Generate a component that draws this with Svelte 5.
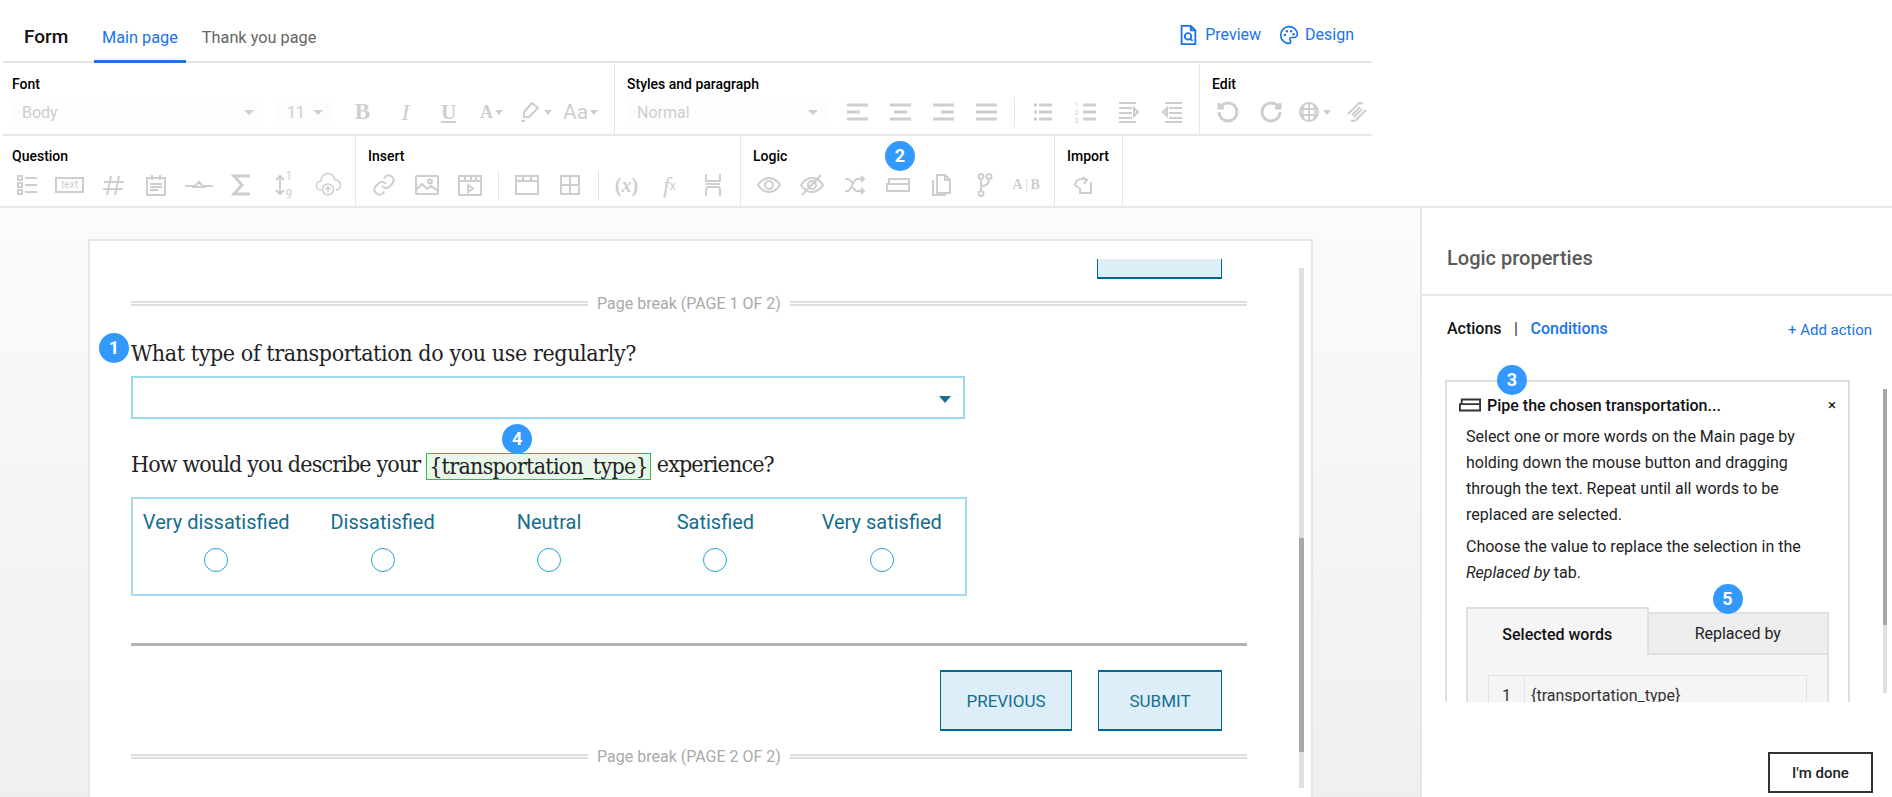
<script>
  const paths = {
    list: 'M3 3h4v4H3z M3 10h4v4H3z M3 17h4v4H3z M10 5h12 M10 12h12 M10 19h12',
    hash: 'M10 3L6 22 M18 3l-4 19 M3 9h20 M2 16h20',
    calendar: 'M3 5h18v17H3z M8 2v5 M16 2v5 M6 11h12 M6 14h12 M6 17h8',
    slider: 'M-2 13h9 M17 13h9 M7 14l5-5 5 5z',
    sigma: 'M20 3H4l8 9-8 9h16',
    sort: 'M7 3v18 M3 7l4-4 4 4 M3 17l4 4 4-4',
    cloud: 'M5 17a4.5 4.5 0 0 1 0-9 7 7 0 0 1 14-1 5 5 0 0 1 1 10 M12 11a5.5 5.5 0 1 0 0 11 5.5 5.5 0 0 0 0-11z M12 20v-6 M9.5 16.5L12 14l2.5 2.5',
    link: 'M10 13a5 5 0 0 0 7.5.5l3-3a5 5 0 0 0-7-7l-1.7 1.7 M14 11a5 5 0 0 0-7.5-.5l-3 3a5 5 0 0 0 7 7l1.7-1.7',
    image: 'M1 4a1 1 0 0 1 1-1h20a1 1 0 0 1 1 1v16a1 1 0 0 1-1 1H2a1 1 0 0 1-1-1z M1 17l6-6 5 5 4-3 7 5 M15 6.5a2 2 0 1 0 0 4 2 2 0 0 0 0-4z',
    video: 'M1 3h22v19H1z M1 8h22 M7 3v5 M13 3v5 M18 3v5 M10 12l5 3.5-5 3.5z',
    win: 'M1 3h22v18H1z M1 8h22 M8 3v5 M16 3v5',
    grid: 'M3 3h18v18H3z M12 3v18 M3 12h18',
    split: 'M5 1v7h14V1 M5 23v-6c0-2 1-3 3-3h8c2 0 3 1 3 3v6 M5 11h14',
    eye: 'M1 12s4-7 11-7 11 7 11 7-4 7-11 7S1 12 1 12z M12 8a4 4 0 1 0 0 8 4 4 0 0 0 0-8z',
    eyeoff: 'M1 12s4-7 11-7 11 7 11 7-4 7-11 7S1 12 1 12z M12 8a4 4 0 1 0 0 8 4 4 0 0 0 0-8z M2 22L21 2',
    shuffle: 'M2 18h3c3 0 5-12 9-12h7 M18 3l3 3-3 3 M2 6h3c1.5 0 3 2 4 4 M21 18h-7c-1.5 0-3-2-4-4 M18 15l3 3-3 3',
    pipe: 'M3 10V6h20v5 M1 11h22v7H1z',
    copy: 'M8 2h8l5 5v13H8z M16 2v5h5 M4 7v15h13',
    branch: 'M9 6v12 M9 13c5 0 8-2 8-7 M9 1a2.5 2.5 0 1 0 0 5 2.5 2.5 0 0 0 0-5z M17 1a2.5 2.5 0 1 0 0 5 2.5 2.5 0 0 0 0-5z M9 18a2.5 2.5 0 1 0 0 5 2.5 2.5 0 0 0 0-5z',
    importbox: 'M4 13a7 7 0 0 1 11-6 M12 4l4 3-3 4 M20 9v11H9v-5 M4 12l4 3',
    alignl: 'M2 5h21 M2 12h13 M2 19h21',
    alignc: 'M2 5h21 M6 12h13 M2 19h21',
    alignr: 'M2 5h21 M10 12h13 M2 19h21',
    alignj: 'M2 5h21 M2 12h21 M2 19h21',
    bullets: 'M3 5h3 M8 5h13 M3 12h3 M8 12h13 M3 19h3 M8 19h13',
    numbers: 'M9 5h13 M9 12h13 M9 19h13',
    indent: 'M2 3h17 M2 8h13 M2 13h13 M2 18h13 M2 22h17 M17 8l4 4-4 4z',
    outdent: 'M5 3h17 M9 8h13 M9 13h13 M9 18h13 M5 22h17 M7 8l-4 4 4 4z',
    undo: 'M3 12a9 9 0 1 0 9-9 9.7 9.7 0 0 0-6.7 2.7L3 8 M3 3v5h5',
    redo: 'M21 12a9 9 0 1 1-9-9 9.7 9.7 0 0 1 6.7 2.7L21 8 M21 3v5h-5',
    globe: 'M12 3a9 9 0 1 0 0 18 9 9 0 0 0 0-18z M3 9h18 M3 15h18 M12 3v18 M7 4.5c-2 4-2 11 0 15 M17 4.5c2 4 2 11 0 15',
    unlink: 'M3 14L13 4a3.5 3.5 0 0 1 5 0 M21 10L11 20a3.5 3.5 0 0 1-5 0 M7 15l8-8 M9 17l8-8',
    pen: 'M14 3l6 5-9 9H6v-5z M3 21h4'
  }

  const question = [
    { icon: 'list' }, { box: 'text' }, { icon: 'hash' }, { icon: 'calendar' }, { icon: 'slider' },
    { icon: 'sigma', heavy: true }, { icon: 'sort', digits: true }, { icon: 'cloud', thin: true }
  ]
  const logic = ['eye', 'eyeoff', 'shuffle', 'pipe', 'copy', 'branch'].map((icon) => ({ icon }))
</script>

{#snippet svg(name, cls = '')}
  <svg class={cls} viewBox="0 0 24 24" width="24" height="24" aria-hidden="true">
    <path d={paths[name]} />
  </svg>
{/snippet}

{#snippet tool(t)}
  <span class="tool">
    {#if t.icon}
      <span class="iconwrap">
        {@render svg(t.icon, t.heavy ? 'heavy' : t.thin ? 'thin' : '')}
        {#if t.digits}<span class="digit d1">1</span><span class="digit d9">9</span>{/if}
      </span>
    {:else if t.box}
      <span class="textbox">{t.box}</span>
    {/if}
  </span>
{/snippet}

<div class="app">
  <div class="top">
    <header class="bar">
      <span class="brand">Form</span>
      <nav class="tabs">
        <span class="tab active">Main page</span>
        <span class="tab">Thank you page</span>
      </nav>
      <div class="links">
        <span class="link">
          <svg viewBox="0 0 24 24" width="22" height="22" aria-hidden="true"><path d="M5 2h10l5 5v15H5z M15 2v5h5 M12 10a3.5 3.5 0 1 0 0 7 3.5 3.5 0 0 0 0-7z M14.5 16l2.5 2.5" /></svg>
          Preview
        </span>
        <span class="link">
          <svg class="palette" viewBox="0 0 24 24" width="20" height="20" aria-hidden="true"><path d="M12 2a10 10 0 1 0 0 20c1.5 0 2-1 2-2 0-1.5-1-1.5-1-3 0-1 1-2 2-2h3a4 4 0 0 0 4-4c0-5-4.5-9-10-9z" /><path class="dots" d="M7 12v.1 M9.5 7.5v.1 M14.5 7.5v.1 M17.5 11v.1" /></svg>
          Design
        </span>
      </div>
    </header>

    <div class="row">
      <section class="group g-font">
        <h4>Font</h4>
        <div class="tools">
          <span class="select body">Body<i class="caret"></i></span>
          <span class="select size">11<i class="caret"></i></span>
          <span class="tool glyph b">B</span>
          <span class="tool glyph i">I</span>
          <span class="tool glyph u">U</span>
          <span class="tool glyph a">A<i class="caret small"></i></span>
          <span class="tool">{@render svg('pen')}<i class="caret small"></i></span>
          <span class="tool glyph aa">Aa<i class="caret small"></i></span>
        </div>
      </section>
      <section class="group g-styles">
        <h4>Styles and paragraph</h4>
        <div class="tools">
          <span class="select normal">Normal<i class="caret"></i></span>
          {#each ['alignl', 'alignc', 'alignr', 'alignj'] as icon}
            <span class="tool">{@render svg(icon, 'heavy')}</span>
          {/each}
          <span class="sep"></span>
          <span class="tool">{@render svg('bullets', 'heavy')}</span>
          <span class="tool">
            <span class="iconwrap">
              {@render svg('numbers', 'heavy')}
              <span class="mini">1<br />2<br />3</span>
            </span>
          </span>
          <span class="tool">{@render svg('indent')}</span>
          <span class="tool">{@render svg('outdent')}</span>
        </div>
      </section>
      <section class="group last">
        <h4>Edit</h4>
        <div class="tools">
          <span class="tool">{@render svg('undo', 'heavy')}</span>
          <span class="tool">{@render svg('redo', 'heavy')}</span>
          <span class="tool">{@render svg('globe')}<i class="caret small"></i></span>
          <span class="tool">{@render svg('unlink')}</span>
        </div>
      </section>
    </div>

    <div class="row second">
      <section class="group">
        <h4>Question</h4>
        <div class="tools q">
          {#each question as t}{@render tool(t)}{/each}
        </div>
      </section>
      <section class="group">
        <h4>Insert</h4>
        <div class="tools">
          <span class="tool">{@render svg('link')}</span>
          <span class="tool">{@render svg('image')}</span>
          <span class="tool">{@render svg('video')}</span>
          <span class="sep"></span>
          <span class="tool">{@render svg('win')}</span>
          <span class="tool">{@render svg('grid')}</span>
          <span class="sep"></span>
          <span class="tool glyph x">(<em>x</em>)</span>
          <span class="tool glyph fx"><em>f</em><small>x</small></span>
          <span class="tool">{@render svg('split')}</span>
        </div>
      </section>
      <section class="group g-logic">
        <h4>Logic</h4>
        <span class="badge b2">2</span>
        <div class="tools">
          {#each logic as t}{@render tool(t)}{/each}
          <span class="tool glyph ab">A<span class="bar-i">|</span>B</span>
        </div>
      </section>
      <section class="group g-import">
        <h4>Import</h4>
        <div class="tools">
          <span class="tool">{@render svg('importbox')}</span>
        </div>
      </section>
    </div>
  </div>

  <main class="work">
    <div class="stage">
      <div class="sheet">
        <div class="flow">
          <div class="stub"></div>

          <div class="pagebreak first"><span>Page break (PAGE 1 OF 2)</span></div>

          <div class="qn q1">
            <span class="badge b1">1</span>
            What type of transportation do you use regularly?
          </div>
          <div class="dropdown"><i class="drop-caret"></i></div>

          <div class="qn q2">
            How would you describe your
            <span class="token"><span class="badge b4">4</span>&#123;transportation_type&#125;</span>
            experience?
          </div>

          <div class="matrix">
            {#each ['Very dissatisfied', 'Dissatisfied', 'Neutral', 'Satisfied', 'Very satisfied'] as label}
              <div class="cell">
                <span>{label}</span>
                <i class="radio"></i>
              </div>
            {/each}
          </div>

          <div class="rule"></div>

          <div class="actions">
            <button class="btn prev">PREVIOUS</button>
            <button class="btn submit">SUBMIT</button>
          </div>

          <div class="pagebreak"><span>Page break (PAGE 2 OF 2)</span></div>
        </div>
        <div class="scroll"><div class="thumb"></div></div>
      </div>
    </div>

    <aside class="panel">
      <div class="panel-head">Logic properties</div>
      <div class="panel-tabs">
        <strong>Actions</strong>
        <span class="pipe-sep">|</span>
        <span class="cond">Conditions</span>
        <span class="add">+ Add action</span>
      </div>

      <div class="card-clip">
        <div class="card">
          <span class="badge b3">3</span>
          <div class="card-title">
            <svg viewBox="0 0 24 24" width="22" height="22" aria-hidden="true"><path d={paths.pipe} /></svg>
            <span>Pipe the chosen transportation...</span>
            <span class="close">×</span>
          </div>
          <div class="card-body">
            <p>Select one or more words on the Main page by holding down the mouse button and dragging through the text. Repeat until all words to be replaced are selected.</p>
            <p>Choose the value to replace the selection in the <em>Replaced by</em> tab.</p>
          </div>
          <div class="pane">
            <div class="pane-tabs">
              <span class="pane-tab on">Selected words</span>
              <span class="pane-tab">
                <span class="badge b5">5</span>
                Replaced by
              </span>
            </div>
            <div class="pane-body">
              <div class="word-row">
                <span class="num">1</span>
                <span class="word">&#123;transportation_type&#125;</span>
              </div>
            </div>
          </div>
        </div>
        <div class="scroll panel-scroll"><div class="thumb"></div></div>
      </div>

      <div class="panel-foot">
        <button class="done">I'm done</button>
      </div>
    </aside>
  </main>
</div>

<style>
  :global(body) {
    margin: 0;
    background: #fff;
    font-family: Roboto, "Liberation Sans", sans-serif;
  }

  .app {
    width: 1892px;
    height: 797px;
    overflow: hidden;
    display: flex;
    flex-direction: column;
    color: #222;
  }

  .top {
    width: 1372px;
    height: 206px;
    flex: none;
  }

  .bar {
    height: 61px;
    margin-left: 3px;
    border-bottom: 2px solid #e4e4e4;
    display: flex;
    align-items: flex-end;
    padding-left: 21px;
  }

  .brand {
    font-size: 19px;
    font-weight: 500;
    color: #111;
    align-self: flex-start;
    margin-top: 25px;
    width: 70px;
  }

  .tabs {
    display: flex;
    gap: 8px;
  }

  .tab {
    padding: 0 8px 11px;
    font-size: 16.3px;
    line-height: 22px;
    color: #666;
    margin-bottom: -2px;
    border-bottom: 3px solid transparent;
  }

  .tab.active {
    color: #1a73e8;
    border-bottom-color: #1a73e8;
  }

  .links {
    margin-left: auto;
    align-self: flex-start;
    margin-top: 24px;
    display: flex;
    gap: 18px;
    padding-right: 18px;
  }

  .link {
    display: flex;
    align-items: center;
    gap: 6px;
    font-size: 16px;
    line-height: 22px;
    color: #1a73e8;
  }

  .link svg path {
    fill: none;
    stroke: #1a73e8;
    stroke-width: 2;
  }

  .link svg .dots {
    stroke-linecap: round;
    stroke-width: 3;
  }

  .row {
    display: flex;
    height: 71px;
    margin-left: 3px;
    border-bottom: 2px solid #e8e8e8;
    overflow: hidden;
  }

  .row.second {
    height: 70px;
    border-bottom: 0;
  }

  .group {
    position: relative;
    margin-left: -3px;
    padding: 13px 6px 0;
    border-right: 1px solid #e6e6e6;
    flex: none;
  }

  .group + .group {
    margin-left: 0;
  }

  .row.second .group {
    padding-top: 12px;
  }

  .row.second h4 {
    margin-bottom: 7px;
  }

  .row.second .group:first-child .tools {
    margin-left: -1px;
  }

  .group.last {
    border-right: 0;
  }

  .g-import {
    width: 68px;
    box-sizing: border-box;
  }

  h4 {
    margin: 0 0 6px 6px;
    font-size: 14px;
    line-height: 16px;
    font-weight: 500;
    color: #000;
    white-space: nowrap;
  }

  .tools {
    display: flex;
    align-items: center;
    height: 28px;
  }

  .tool {
    width: 43px;
    height: 28px;
    flex: none;
    display: flex;
    align-items: center;
    justify-content: center;
    color: #cdcdd2;
  }

  .tool svg {
    overflow: visible;
    flex: none;
  }

  .tool svg path {
    fill: none;
    stroke: #cdcdd2;
    stroke-width: 2;
  }

  .tool svg.heavy path {
    stroke-width: 3;
  }

  .tool svg.thin path {
    stroke-width: 1.5;
  }

  .iconwrap {
    position: relative;
    display: flex;
  }

  .digit {
    position: absolute;
    left: 13px;
    font-size: 12px;
    line-height: 12px;
    color: #cdcdd2;
  }

  .d1 { top: -3px; }
  .d9 { bottom: -3px; }

  .mini {
    position: absolute;
    left: 1px;
    top: 1px;
    font-size: 7px;
    line-height: 8px;
    color: #cdcdd2;
  }

  .textbox {
    width: 25px;
    height: 12px;
    border: 2px solid #cdcdd2;
    font-size: 10px;
    line-height: 12px;
    text-align: center;
    color: #cdcdd2;
  }

  .select {
    box-sizing: border-box;
    height: 28px;
    display: flex;
    align-items: center;
    justify-content: space-between;
    padding: 0 10px;
    background: #fdfdfd;
    color: #cdcdd2;
    font-size: 16px;
    flex: none;
  }

  .body {
    width: 252px;
    margin-left: 6px;
    margin-right: 13px;
  }

  .size {
    width: 56px;
    margin-right: 8px;
  }

  .normal {
    width: 201px;
    margin-left: 6px;
    margin-right: 7px;
  }

  .caret {
    display: block;
    width: 0;
    height: 0;
    border-left: 5px solid transparent;
    border-right: 5px solid transparent;
    border-top: 5px solid #cdcdd2;
    flex: none;
  }

  .caret.small {
    border-left-width: 4.5px;
    border-right-width: 4.5px;
    margin-left: 2px;
  }

  .glyph {
    font-family: "Liberation Serif", serif;
    font-size: 21px;
    font-weight: 700;
  }

  .glyph.b { font-size: 23px; }
  .glyph.i { font-style: italic; font-weight: 400; font-size: 24px; }
  .glyph.u { text-decoration: underline; font-size: 21px; }
  .glyph.a { font-size: 18px; }
  .glyph.aa { font-family: Roboto, sans-serif; font-weight: 400; font-size: 21px; width: 52px; justify-content: flex-start; padding-left: 7px; box-sizing: border-box; }
  .glyph.x { font-size: 20px; }
  .glyph.fx { font-weight: 400; font-size: 24px; }
  .glyph.fx small { font-size: 13px; font-family: Roboto, sans-serif; }
  .glyph.ab { font-size: 14px; font-weight: 700; letter-spacing: 0.5px; }
  .bar-i { font-weight: 400; margin: 0 2px; }

  .sep {
    width: 14px;
    height: 30px;
    flex: none;
    background: linear-gradient(#e6e6e6, #e6e6e6) center / 1px 100% no-repeat;
  }

  .badge {
    position: absolute;
    width: 30px;
    height: 30px;
    border-radius: 50%;
    background: #3399ff;
    color: #fff;
    font-family: Roboto, sans-serif;
    font-size: 18px;
    font-weight: 700;
    font-style: normal;
    line-height: 30px;
    text-align: center;
    letter-spacing: 0;
    z-index: 2;
  }

  .b2 { left: 144px; top: 5px; }

  .work {
    flex: 1;
    min-height: 0;
    display: flex;
    border-top: 2px solid #e8e8e8;
  }

  .stage {
    width: 1420px;
    flex: none;
    box-sizing: border-box;
    padding: 31px 0 0 88px;
    background: linear-gradient(#fbfbfb, #efefef);
  }

  .sheet {
    position: relative;
    width: 1225px;
    height: 600px;
    box-sizing: border-box;
    border: 2px solid #e6e6e6;
    background: #fff;
    overflow: hidden;
  }

  .flow {
    width: 1116px;
    padding-left: 41px;
  }

  .stub {
    width: 125px;
    height: 20px;
    margin: 18px 0 0 966px;
    box-sizing: border-box;
    background: #deeef8;
    border: 1px solid #00688f;
    border-top: 0;
    border-bottom-width: 2px;
  }

  .pagebreak {
    height: 20px;
    margin-top: 15px;
    display: flex;
    align-items: center;
    gap: 9px;
    font-size: 16px;
    color: #aaa;
  }

  .pagebreak.first {
    margin-top: 14px;
  }

  .pagebreak::before,
  .pagebreak::after {
    content: "";
    flex: 1;
    height: 5px;
    box-sizing: border-box;
    border-top: 2px solid #ddd;
    border-bottom: 2px solid #ddd;
  }

  .qn {
    position: relative;
    height: 30px;
    font-family: "DejaVu Serif Condensed", "Liberation Serif", serif;
    font-size: 23px;
    line-height: 30px;
    color: #222;
    white-space: nowrap;
  }

  .q1 { margin-top: 25px; letter-spacing: -0.4px; }
  .q2 { margin-top: 30px; letter-spacing: -0.85px; }

  .b1 { left: -32px; top: -5px; }

  .dropdown {
    position: relative;
    width: 834px;
    height: 43px;
    margin-top: 8px;
    box-sizing: border-box;
    border: 2px solid #9bd9ef;
  }

  .drop-caret {
    position: absolute;
    right: 12px;
    top: 18px;
    width: 0;
    height: 0;
    border-left: 6px solid transparent;
    border-right: 6px solid transparent;
    border-top: 7px solid #136e90;
  }

  .token {
    position: relative;
    display: inline-block;
    box-sizing: border-box;
    height: 27px;
    line-height: 25px;
    padding: 0 2px;
    background: #e9f7ea;
    border: 1.5px solid #3cb85a;
    vertical-align: middle;
    letter-spacing: -0.7px;
  }

  .b4 { left: 75px; top: -30px; }

  .matrix {
    width: 836px;
    height: 99px;
    margin-top: 18px;
    box-sizing: border-box;
    border: 2px solid #a6dcef;
    display: grid;
    grid-template-columns: repeat(5, 1fr);
  }

  .cell {
    display: flex;
    flex-direction: column;
    align-items: center;
    padding-top: 12px;
    gap: 15px;
    font-size: 20px;
    line-height: 22px;
    color: #136e90;
  }

  .radio {
    display: block;
    width: 24px;
    height: 24px;
    box-sizing: border-box;
    border: 1.5px solid #2a9fcf;
    border-radius: 50%;
  }

  .rule {
    height: 3px;
    margin-top: 47px;
    background: #b3b3b3;
  }

  .actions {
    display: flex;
    justify-content: flex-end;
    gap: 26px;
    padding-right: 25px;
    margin-top: 24px;
  }

  .btn {
    height: 61px;
    box-sizing: border-box;
    background: #deeef8;
    border: 1px solid #00688f;
    border-top-width: 2px;
    border-bottom-width: 2px;
    color: #136e90;
    font-family: Roboto, sans-serif;
    font-size: 17px;
    padding: 0;
  }

  .prev { width: 132px; }
  .submit { width: 124px; }

  .scroll {
    position: absolute;
    left: 1209px;
    top: 27px;
    width: 5px;
    height: 520px;
    background: #e0e0e0;
  }

  .thumb {
    position: absolute;
    left: 0;
    top: 270px;
    width: 100%;
    height: 214px;
    background: #a8a8a8;
  }

  .panel {
    flex: 1;
    border-left: 2px solid #e6e6e6;
    display: flex;
    flex-direction: column;
    min-width: 0;
  }

  .panel-head {
    height: 88px;
    box-sizing: border-box;
    padding: 37px 0 0 25px;
    font-size: 20px;
    line-height: 26px;
    font-weight: 500;
    color: #5a5a5a;
    border-bottom: 2px solid #e8e8e8;
  }

  .panel-tabs {
    display: flex;
    align-items: baseline;
    padding: 22px 20px 0 25px;
    height: 84px;
    box-sizing: border-box;
    font-size: 16px;
    line-height: 22px;
  }

  .panel-tabs strong {
    font-weight: 500;
    color: #111;
  }

  .pipe-sep {
    margin: 0 12.5px;
    color: #333;
  }

  .cond {
    color: #1a73e8;
    font-weight: 500;
  }

  .add {
    margin-left: auto;
    color: #1a73e8;
    font-size: 15px;
    position: relative;
    top: 1px;
  }

  .card-clip {
    position: relative;
    height: 322px;
    padding-left: 23px;
    clip-path: inset(-20px 0 0 0);
  }

  .card {
    position: relative;
    width: 405px;
    height: 420px;
    box-sizing: border-box;
    border: 2px solid #dedede;
  }

  .b3 { left: 50px; top: -17px; }

  .card-title {
    display: flex;
    align-items: center;
    height: 24px;
    margin-top: 11px;
    padding-left: 12px;
    gap: 6px;
    font-size: 16px;
    font-weight: 500;
    color: #111;
  }

  .card-title svg path {
    fill: none;
    stroke: #333;
    stroke-width: 2;
  }

  .close {
    margin-left: auto;
    padding-right: 12px;
    font-size: 15px;
    font-weight: 400;
  }

  .card-body {
    padding: 7px 19px 0;
    font-size: 16px;
    line-height: 26px;
    color: #222;
  }

  .card-body p {
    margin: 0 0 6px;
  }

  .pane {
    margin: 21px 19px 0;
    height: 200px;
    background: #f5f5f5;
    border: 2px solid #e0e0e0;
    border-top: 0;
  }

  .pane-tabs {
    display: flex;
    margin: 0 -2px;
    align-items: flex-end;
    font-size: 16px;
    background: #fff;
  }

  .pane-tab {
    position: relative;
    flex: 1;
    box-sizing: border-box;
    height: 43px;
    display: flex;
    align-items: center;
    justify-content: center;
    background: #eeeeee;
    border: 2px solid #e0e0e0;
    border-left: 0;
  }

  .pane-tab.on {
    height: 48px;
    padding-top: 5px;
    background: #f5f5f5;
    border-left: 2px solid #e0e0e0;
    border-bottom: 0;
    font-weight: 500;
    color: #111;
  }

  .b5 { left: 64px; top: -30px; }

  .pane-body {
    padding: 20px 20px 0;
  }

  .word-row {
    display: flex;
    height: 60px;
    border: 1px solid #dde3e6;
    font-size: 16px;
    color: #333;
  }

  .num {
    width: 36px;
    flex: none;
    text-align: center;
    border-right: 1px solid #dde3e6;
    padding-top: 10px;
    box-sizing: border-box;
  }

  .word {
    padding: 10px 0 0 6px;
  }

  .panel-scroll {
    left: 461px;
    top: 9px;
    height: 304px;
    width: 4px;
    z-index: 2;
  }

  .panel-scroll .thumb {
    top: 0;
    height: 236px;
  }

  .panel-foot {
    display: flex;
    justify-content: flex-end;
    padding: 50px 19px 0 0;
  }

  .done {
    width: 105px;
    height: 41px;
    background: #fff;
    border: 2px solid #333;
    font-family: Roboto, sans-serif;
    font-size: 15px;
    font-weight: 500;
    color: #222;
    padding: 0;
  }
</style>
